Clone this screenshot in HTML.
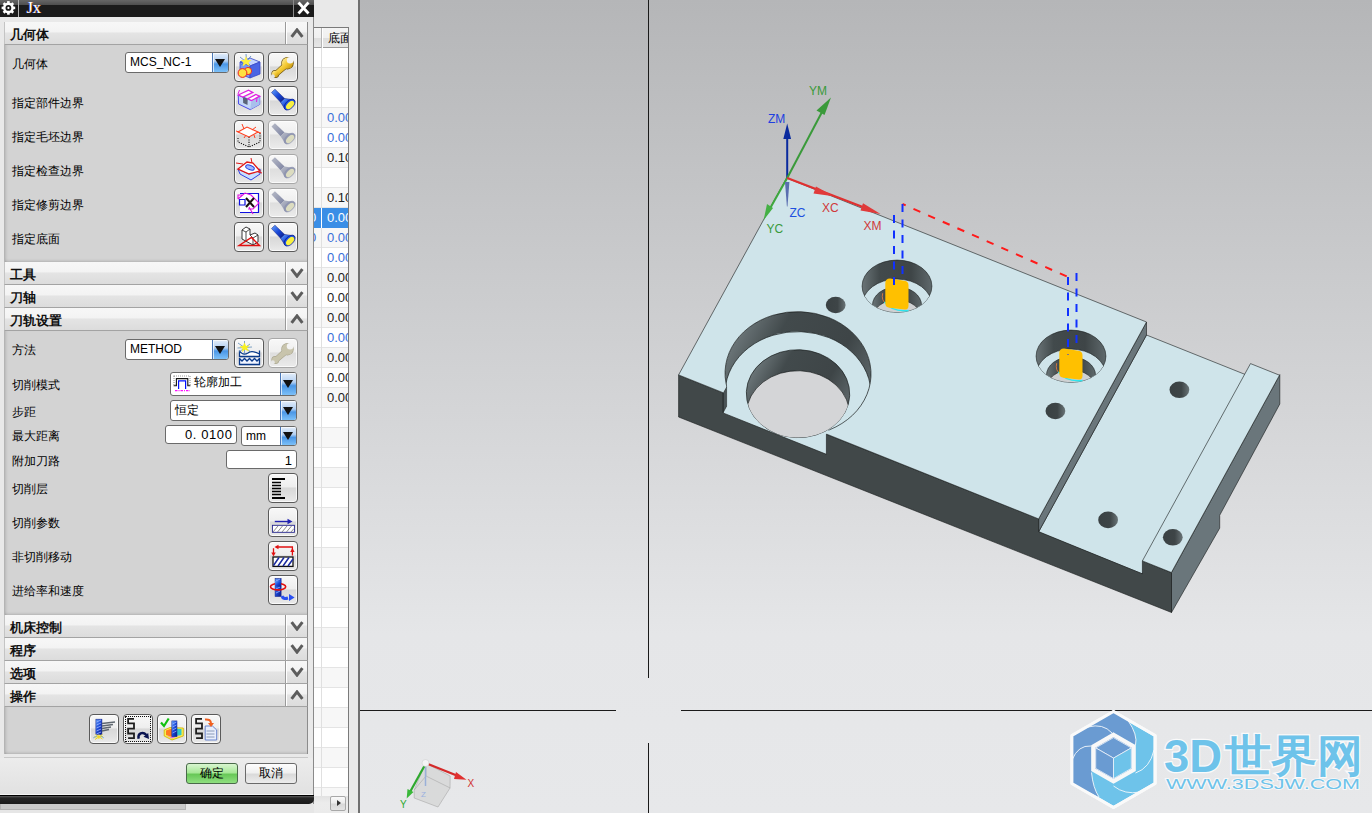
<!DOCTYPE html>
<html><head><meta charset="utf-8">
<style>
*{margin:0;padding:0;box-sizing:border-box}
html,body{width:1372px;height:813px;overflow:hidden;background:#e8e8e8;font-family:'Liberation Sans', sans-serif;font-size:12px;color:#000}
.a{position:absolute}
.hdr{position:absolute;left:4px;width:304px;height:23px;background:linear-gradient(#f7f7f7 0,#f3f3f3 45%,#e4e4e4 50%,#dcdcdc 100%);border-bottom:1px solid #a3a3a3;border-right:1px solid #8c8c8c;border-left:1px solid #c4c4c4}
.hdr .t{position:absolute;left:5px;top:4.6px;font-weight:bold;font-size:13px;line-height:15px;color:#111}
.hdr .sep{position:absolute;left:280px;top:0;width:1px;height:22px;background:#9a9a9a;box-shadow:1px 0 0 #fff}
.hdr svg{position:absolute;left:285px;top:6px}
.cnt{position:absolute;left:4px;width:304px;background:#d3d3d3;border-left:1px solid #b4b4b4;border-right:1px solid #8c8c8c;box-shadow:inset 3px 0 3px -2px rgba(0,0,0,0.13),inset 0 -3px 3px -2px rgba(0,0,0,0.16)}
.lbl{position:absolute;left:12px;font-size:12px;line-height:14px;color:#000}
.btn{position:absolute;width:30px;height:30px;border:1px solid #5a5a5a;border-radius:4px;background:linear-gradient(#f8f8f8 0,#eeeeee 46%,#d8d8d8 50%,#e0e0e0 75%,#eaeaea 100%);box-shadow:inset 0 0 0 1px rgba(255,255,255,0.75)}
.btn.dis{border-color:#a8a8a8;background:linear-gradient(#f8f8f8 0,#efefef 46%,#dedede 50%,#e4e4e4 75%,#ececec 100%)}
.btn svg{position:absolute;left:0;top:0}
.dd{position:absolute;height:21px;border:1px solid #6a6a6a;border-radius:3px;background:#fff;overflow:hidden}
.dd .v{position:absolute;left:4px;top:3px;font-size:12px;line-height:14px}
.dd .b{position:absolute;right:0;top:0;width:16px;height:100%;background:linear-gradient(#e4eefa 0,#b4d0f2 42%,#4a96e6 58%,#7cc0f8 100%);border-left:1px solid #4a78b8;box-shadow:inset 1px 1px 0 rgba(255,255,255,0.7)}
.dd .b:after{content:'';position:absolute;left:2px;top:50%;margin-top:-4px;border-left:5.5px solid transparent;border-right:5.5px solid transparent;border-top:8px solid #111}
.inp{position:absolute;height:19px;border:1px solid #6a6a6a;border-radius:3px;background:#fff}
.row{position:absolute;left:0;width:34px;height:20px;border-bottom:1px solid #e2e2e2}
</style></head><body>

<div class="a" style="left:313px;top:0;width:47px;height:813px;background:#e9e9e9"></div>
<div class="a" style="left:313px;top:27px;width:36px;height:786px;background:#fff;border:1px solid #7a7a7a;border-bottom:none;border-left:none;overflow:hidden">
<div class="a" style="left:0;top:0;width:35px;height:20px;background:linear-gradient(#f4f4f4 0,#f0f0f0 50%,#dedede 55%,#e6e6e6 100%);border-bottom:1px solid #9a9a9a"></div>
<div class="a" style="left:8px;top:0;width:1px;height:20px;background:#b5b5b5;box-shadow:1px 0 0 #fff"></div>
<div class="a" style="left:15px;top:3px;font-size:12px;line-height:14px;white-space:nowrap">底面</div>
<div class="a" style="left:0;top:20px;width:35px;height:20px;background:#fff;border-bottom:1px solid #e4e4e4"></div>
<div class="a" style="left:0;top:40px;width:35px;height:20px;background:#f7f7f7;border-bottom:1px solid #e4e4e4"></div>
<div class="a" style="left:0;top:60px;width:35px;height:20px;background:#fff;border-bottom:1px solid #e4e4e4"></div>
<div class="a" style="left:0;top:80px;width:35px;height:20px;background:#f7f7f7;border-bottom:1px solid #e4e4e4"></div>
<div class="a" style="left:0;top:100px;width:35px;height:20px;background:#fff;border-bottom:1px solid #e4e4e4"></div>
<div class="a" style="left:0;top:120px;width:35px;height:20px;background:#f7f7f7;border-bottom:1px solid #e4e4e4"></div>
<div class="a" style="left:0;top:140px;width:35px;height:20px;background:#fff;border-bottom:1px solid #e4e4e4"></div>
<div class="a" style="left:0;top:160px;width:35px;height:20px;background:#f7f7f7;border-bottom:1px solid #e4e4e4"></div>
<div class="a" style="left:0;top:180px;width:35px;height:20px;background:#fff;border-bottom:1px solid #e4e4e4"></div>
<div class="a" style="left:0;top:200px;width:35px;height:20px;background:#f7f7f7;border-bottom:1px solid #e4e4e4"></div>
<div class="a" style="left:0;top:220px;width:35px;height:20px;background:#fff;border-bottom:1px solid #e4e4e4"></div>
<div class="a" style="left:0;top:240px;width:35px;height:20px;background:#f7f7f7;border-bottom:1px solid #e4e4e4"></div>
<div class="a" style="left:0;top:260px;width:35px;height:20px;background:#fff;border-bottom:1px solid #e4e4e4"></div>
<div class="a" style="left:0;top:280px;width:35px;height:20px;background:#f7f7f7;border-bottom:1px solid #e4e4e4"></div>
<div class="a" style="left:0;top:300px;width:35px;height:20px;background:#fff;border-bottom:1px solid #e4e4e4"></div>
<div class="a" style="left:0;top:320px;width:35px;height:20px;background:#f7f7f7;border-bottom:1px solid #e4e4e4"></div>
<div class="a" style="left:0;top:340px;width:35px;height:20px;background:#fff;border-bottom:1px solid #e4e4e4"></div>
<div class="a" style="left:0;top:360px;width:35px;height:20px;background:#f7f7f7;border-bottom:1px solid #e4e4e4"></div>
<div class="a" style="left:0;top:380px;width:35px;height:20px;background:#fff;border-bottom:1px solid #e4e4e4"></div>
<div class="a" style="left:0;top:400px;width:35px;height:20px;background:#f7f7f7;border-bottom:1px solid #e4e4e4"></div>
<div class="a" style="left:0;top:420px;width:35px;height:20px;background:#fff;border-bottom:1px solid #e4e4e4"></div>
<div class="a" style="left:0;top:440px;width:35px;height:20px;background:#f7f7f7;border-bottom:1px solid #e4e4e4"></div>
<div class="a" style="left:0;top:460px;width:35px;height:20px;background:#fff;border-bottom:1px solid #e4e4e4"></div>
<div class="a" style="left:0;top:480px;width:35px;height:20px;background:#f7f7f7;border-bottom:1px solid #e4e4e4"></div>
<div class="a" style="left:0;top:500px;width:35px;height:20px;background:#fff;border-bottom:1px solid #e4e4e4"></div>
<div class="a" style="left:0;top:520px;width:35px;height:20px;background:#f7f7f7;border-bottom:1px solid #e4e4e4"></div>
<div class="a" style="left:0;top:540px;width:35px;height:20px;background:#fff;border-bottom:1px solid #e4e4e4"></div>
<div class="a" style="left:0;top:560px;width:35px;height:20px;background:#f7f7f7;border-bottom:1px solid #e4e4e4"></div>
<div class="a" style="left:0;top:580px;width:35px;height:20px;background:#fff;border-bottom:1px solid #e4e4e4"></div>
<div class="a" style="left:0;top:600px;width:35px;height:20px;background:#f7f7f7;border-bottom:1px solid #e4e4e4"></div>
<div class="a" style="left:0;top:620px;width:35px;height:20px;background:#fff;border-bottom:1px solid #e4e4e4"></div>
<div class="a" style="left:0;top:640px;width:35px;height:20px;background:#f7f7f7;border-bottom:1px solid #e4e4e4"></div>
<div class="a" style="left:0;top:660px;width:35px;height:20px;background:#fff;border-bottom:1px solid #e4e4e4"></div>
<div class="a" style="left:0;top:680px;width:35px;height:20px;background:#f7f7f7;border-bottom:1px solid #e4e4e4"></div>
<div class="a" style="left:0;top:700px;width:35px;height:20px;background:#fff;border-bottom:1px solid #e4e4e4"></div>
<div class="a" style="left:0;top:720px;width:35px;height:20px;background:#f7f7f7;border-bottom:1px solid #e4e4e4"></div>
<div class="a" style="left:0;top:740px;width:35px;height:20px;background:#fff;border-bottom:1px solid #e4e4e4"></div>
<div class="a" style="left:0;top:760px;width:35px;height:20px;background:#f7f7f7;border-bottom:1px solid #e4e4e4"></div>
<div class="a" style="left:0;top:780px;width:35px;height:20px;background:#fff;border-bottom:1px solid #e4e4e4"></div>
<div class="a" style="left:0;top:180px;width:35px;height:20px;background:#3a8ee6"></div>
<div class="a" style="left:8px;top:20px;width:1px;height:780px;background:#e0e0e0"></div>
<div class="a" style="left:8px;top:180px;width:1px;height:20px;background:#fff"></div>
<div class="a" style="left:14px;top:83px;font-size:13px;line-height:14px;color:#3a6fd8;white-space:nowrap">0.00</div>
<div class="a" style="left:14px;top:103px;font-size:13px;line-height:14px;color:#3a6fd8;white-space:nowrap">0.00</div>
<div class="a" style="left:14px;top:123px;font-size:13px;line-height:14px;color:#222;white-space:nowrap">0.10</div>
<div class="a" style="left:14px;top:163px;font-size:13px;line-height:14px;color:#222;white-space:nowrap">0.10</div>
<div class="a" style="left:14px;top:183px;font-size:13px;line-height:14px;color:#fff;white-space:nowrap">0.00</div>
<div class="a" style="left:14px;top:203px;font-size:13px;line-height:14px;color:#3a6fd8;white-space:nowrap">0.00</div>
<div class="a" style="left:14px;top:223px;font-size:13px;line-height:14px;color:#3a6fd8;white-space:nowrap">0.00</div>
<div class="a" style="left:14px;top:243px;font-size:13px;line-height:14px;color:#222;white-space:nowrap">0.00</div>
<div class="a" style="left:14px;top:263px;font-size:13px;line-height:14px;color:#222;white-space:nowrap">0.00</div>
<div class="a" style="left:14px;top:283px;font-size:13px;line-height:14px;color:#222;white-space:nowrap">0.00</div>
<div class="a" style="left:14px;top:303px;font-size:13px;line-height:14px;color:#3a6fd8;white-space:nowrap">0.00</div>
<div class="a" style="left:14px;top:323px;font-size:13px;line-height:14px;color:#222;white-space:nowrap">0.00</div>
<div class="a" style="left:14px;top:343px;font-size:13px;line-height:14px;color:#222;white-space:nowrap">0.00</div>
<div class="a" style="left:14px;top:363px;font-size:13px;line-height:14px;color:#222;white-space:nowrap">0.00</div>
<div class="a" style="left:-4px;top:183px;font-size:13px;line-height:14px;color:#fff">0</div>
<div class="a" style="left:-4px;top:203px;font-size:13px;line-height:14px;color:#3a6fd8">0</div>
</div>
<div class="a" style="left:358px;top:0;width:2px;height:813px;background:#707070"></div>
<div class="a" style="left:313px;top:796px;width:35px;height:17px;background:linear-gradient(#e2e2e2,#ececec 40%,#ebebeb)"></div>
<div class="a" style="left:330px;top:796px;width:16px;height:15px;border:1px solid #a8a8a8;border-radius:2px;background:linear-gradient(#fafafa 0,#ececec 45%,#d8d8d8 55%,#e4e4e4 100%)"></div>
<div class="a" style="left:337px;top:800px;border-top:3.5px solid transparent;border-bottom:3.5px solid transparent;border-left:4px solid #333"></div>
<svg class="a" style="left:360px;top:0" width="1012" height="813" viewBox="360 0 1012 813">
<defs>
<linearGradient id="vbg" x1="0" y1="0" x2="0" y2="813" gradientUnits="userSpaceOnUse">
<stop offset="0" stop-color="#b5b6b8"/><stop offset="0.78" stop-color="#e5e6e8"/><stop offset="1" stop-color="#e7e8ea"/></linearGradient>
<linearGradient id="wallg" x1="0" y1="0" x2="1" y2="0">
<stop offset="0" stop-color="#6a7477"/><stop offset="0.25" stop-color="#424a4c"/><stop offset="0.7" stop-color="#3e4547"/><stop offset="1" stop-color="#5f696c"/></linearGradient>
<linearGradient id="holeg" x1="0" y1="0" x2="1" y2="0">
<stop offset="0" stop-color="#3a4143"/><stop offset="0.6" stop-color="#3e4547"/><stop offset="1" stop-color="#6a7477"/></linearGradient>
</defs>
<rect x="360" y="0" width="1012" height="813" fill="url(#vbg)"/>
<clipPath id="cb1"><circle cx="0" cy="0" r="66.2" transform="matrix(1,0.4,-0.4644,0.8475,798.03,373.66)"/><polygon points="744.6,353.4 848.0,394.8 826.4,434.3 826.4,454.3 723.0,412.9 723.0,392.9"/></clipPath>
<clipPath id="cb2"><circle cx="0" cy="0" r="46.9" transform="matrix(1,0.4,-0.4644,0.8475,798.03,393.66)"/></clipPath>
<circle cx="0" cy="0" r="66.2" transform="matrix(1,0.4,-0.4644,0.8475,798.03,373.66)" fill="url(#wallg)"/>
<clipPath id="cb0"><circle cx="0" cy="0" r="66.2" transform="matrix(1,0.4,-0.4644,0.8475,798.03,373.66)"/></clipPath>
<g clip-path="url(#cb1)"><circle cx="0" cy="0" r="66.2" transform="matrix(1,0.4,-0.4644,0.8475,798.03,393.66)" fill="#cfe4ea"/></g>
<g clip-path="url(#cb0)"><circle cx="0" cy="0" r="66.2" transform="matrix(1,0.4,-0.4644,0.8475,798.03,393.66)" fill="none" stroke="#161a1a" stroke-width="0.6"/></g>
<polygon points="744.6,373.4 848.0,414.8 826.4,454.3 723.0,412.9" fill="#cfe4ea"/>
<polygon points="726.6,386.2 723.0,392.9 723.0,412.9 726.6,406.2" fill="#4a5356" stroke="#161a1a" stroke-width="0.5"/>
<circle cx="0" cy="0" r="46.9" transform="matrix(1,0.4,-0.4644,0.8475,798.03,393.66)" fill="url(#wallg)" stroke="#161a1a" stroke-width="0.6"/>
<g clip-path="url(#cb2)"><circle cx="0" cy="0" r="46.9" transform="matrix(1,0.4,-0.4644,0.8475,798.03,414.66)" fill="#d4d5d7" stroke="#161a1a" stroke-width="0.6"/></g>
<polygon points="1146.5,335.0 1250.5,376.6 1142.4,573.9 1038.4,532.3" fill="#cfe4ea" stroke="#161a1a" stroke-width="0.6"/>
<polygon points="1146.5,322.0 1146.5,335.0 1038.6,531.9 1038.6,518.9" fill="#6a767b" stroke="#161a1a" stroke-width="0.6"/>
<polygon points="1171.5,572.6 1279.8,374.6 1279.8,404.0 1219.7,515.3 1219.7,528.2 1171.5,612.5" fill="#6a767b" stroke="#161a1a" stroke-width="0.6"/>
<polygon points="678.6,375.0 678.6,417.0 1171.5,612.5 1171.5,572.6 1142.4,560.9 1142.4,573.9 1038.6,531.6 1038.6,518.7 826.4,434.3 826.4,454.3 723.0,412.9 723.0,392.9" fill="#414849" stroke="#161a1a" stroke-width="0.6"/>
<polygon points="1250.5,363.6 1279.5,375.2 1171.4,572.5 1142.4,560.9" fill="#cfe4ea" stroke="#161a1a" stroke-width="0.6"/>
<mask id="mtop" maskUnits="userSpaceOnUse" x="360" y="0" width="1012" height="813"><rect x="360" y="0" width="1012" height="813" fill="#fff"/>
<circle cx="0" cy="0" r="66.2" transform="matrix(1,0.4,-0.4644,0.8475,798.03,373.66)" fill="#000"/>
<polygon points="744.6,353.4 848.0,394.8 822.9,440.6 719.5,399.2" fill="#000"/>
</mask>
<polygon points="786.5,178.0 1146.5,322.0 1038.6,518.9 678.6,374.9" fill="#cfe4ea" mask="url(#mtop)"/>
<polygon points="786.5,178.0 1146.5,322.0 1038.6,518.9 678.6,374.9" fill="none" stroke="#161a1a" stroke-width="0.6" mask="url(#mtop)"/>
<mask id="mnotch" maskUnits="userSpaceOnUse" x="360" y="0" width="1012" height="813"><rect x="360" y="0" width="1012" height="813" fill="#fff"/>
<polygon points="738.1,365.3 841.5,406.7 826.4,434.3 826.4,464.3 710.3,446.1 723.0,392.9" fill="#000"/>
</mask>
<g mask="url(#mnotch)"><circle cx="0" cy="0" r="66.2" transform="matrix(1,0.4,-0.4644,0.8475,798.03,373.66)" fill="none" stroke="#161a1a" stroke-width="0.6"/></g>
<ellipse cx="835.7" cy="305" rx="9.9" ry="8.3" fill="url(#holeg)"/>
<ellipse cx="1055.4" cy="411" rx="9.9" ry="8.3" fill="url(#holeg)"/>
<ellipse cx="1179.4" cy="389.8" rx="9.9" ry="8.3" fill="url(#holeg)"/>
<ellipse cx="1108.1" cy="519.9" rx="9.9" ry="8.3" fill="url(#holeg)"/>
<ellipse cx="1172.8" cy="537.3" rx="9.9" ry="8.3" fill="url(#holeg)"/>
<clipPath id="ca1"><ellipse cx="897" cy="286.2" rx="34.9" ry="26.1"/></clipPath>
<clipPath id="cc1"><ellipse cx="897" cy="305.2" rx="24.5" ry="18.3"/></clipPath>
<ellipse cx="897" cy="286.2" rx="34.9" ry="26.1" fill="url(#wallg)" stroke="#161a1a" stroke-width="0.6"/>
<g clip-path="url(#ca1)"><ellipse cx="897" cy="305.2" rx="34.9" ry="26.1" fill="#cfe4ea" stroke="#161a1a" stroke-width="0.6"/>
<ellipse cx="897" cy="305.2" rx="24.5" ry="18.3" fill="url(#wallg)" stroke="#161a1a" stroke-width="0.6"/>
<g clip-path="url(#cc1)"><ellipse cx="897" cy="318.2" rx="24.5" ry="18.3" fill="#cfd1d3" stroke="#161a1a" stroke-width="0.5"/></g>
</g>
<path d="M882.7,293.2 Q881,300.2 886,303.7" fill="none" stroke="#f08040" stroke-width="0.8"/>
<path d="M884.4,301.9 Q892,312.2 908.5,310.5" fill="none" stroke="#2ee6f0" stroke-width="1.6"/>
<path d="M885.3,283.2 Q885.3,278.59999999999997 890,278.59999999999997 L904.5,280.7 Q908.5,281.2 908.5,285.2 L908.5,305.7 Q908.5,309.59999999999997 904.5,309.59999999999997 L889.5,307.7 Q885.3,307.2 885.3,303.2 Z" fill="#ffc000"/>
<clipPath id="ca2"><ellipse cx="1071" cy="356.2" rx="34.9" ry="26.1"/></clipPath>
<clipPath id="cc2"><ellipse cx="1071" cy="375.2" rx="24.5" ry="18.3"/></clipPath>
<ellipse cx="1071" cy="356.2" rx="34.9" ry="26.1" fill="url(#wallg)" stroke="#161a1a" stroke-width="0.6"/>
<g clip-path="url(#ca2)"><ellipse cx="1071" cy="375.2" rx="34.9" ry="26.1" fill="#cfe4ea" stroke="#161a1a" stroke-width="0.6"/>
<ellipse cx="1071" cy="375.2" rx="24.5" ry="18.3" fill="url(#wallg)" stroke="#161a1a" stroke-width="0.6"/>
<g clip-path="url(#cc2)"><ellipse cx="1071" cy="388.2" rx="24.5" ry="18.3" fill="#cfd1d3" stroke="#161a1a" stroke-width="0.5"/></g>
</g>
<path d="M1056.7,363.2 Q1055,370.2 1060,373.7" fill="none" stroke="#f08040" stroke-width="0.8"/>
<path d="M1058.4,371.9 Q1066,382.2 1082.5,380.5" fill="none" stroke="#2ee6f0" stroke-width="1.6"/>
<path d="M1059.3,353.2 Q1059.3,348.59999999999997 1064,348.59999999999997 L1078.5,350.7 Q1082.5,351.2 1082.5,355.2 L1082.5,375.7 Q1082.5,379.59999999999997 1078.5,379.59999999999997 L1063.5,377.7 Q1059.3,377.2 1059.3,373.2 Z" fill="#ffc000"/>
<g fill="none" stroke-width="2">
<line x1="902.5" y1="204" x2="1068" y2="277" stroke="#ff1a1a" stroke-dasharray="7.5,8.5" stroke-dashoffset="4"/>
<line x1="894" y1="215" x2="894" y2="286" stroke="#1030ff" stroke-dasharray="8,7.5"/>
<line x1="902.5" y1="204" x2="902.5" y2="275" stroke="#1030ff" stroke-dasharray="8,7.5"/>
<line x1="1068" y1="277" x2="1068" y2="355" stroke="#1030ff" stroke-dasharray="8,7.5"/>
<line x1="1076.5" y1="273" x2="1076.5" y2="345" stroke="#1030ff" stroke-dasharray="8,7.5"/>
</g>
<g font-family="&quot;Liberation Sans&quot;, sans-serif" font-size="12">
<line x1="787.2" y1="178" x2="787.2" y2="136" stroke="#0a2a9e" stroke-width="2"/>
<polygon points="787.2,123.5 783.3,139 791.1,139" fill="#0a2a9e"/>
<line x1="787.2" y1="178" x2="822" y2="112" stroke="#3a9a3a" stroke-width="2"/>
<polygon points="831,97.6 816.5,110.5 824.5,115" fill="#3a9a3a"/>
<line x1="787.2" y1="178" x2="768" y2="212" stroke="#3ea83e" stroke-width="2"/>
<polygon points="763.6,220.2 767,204 773,208" fill="#44b044"/>
<polygon points="785,182 789.4,182 787.5,206.6 786.9,206.6" fill="#5a6eb0"/>
<line x1="787.2" y1="178" x2="872" y2="210.5" stroke="#e03030" stroke-width="2"/>
<polygon points="833.6,196.2 816,186.5 813.5,193.5" fill="#e03a3a"/>
<polygon points="880.6,214 863,203.2 860.5,210.5" fill="#e03a3a"/>
<text x="768" y="122.5" fill="#2040e0">ZM</text>
<text x="809" y="94.8" fill="#3a9a3a">YM</text>
<text x="766.5" y="232.7" fill="#3a9a3a">YC</text>
<text x="789.5" y="217" fill="#2050e0">ZC</text>
<text x="822" y="211.9" fill="#d03a3a">XC</text>
<text x="863.5" y="229.6" fill="#d03a3a">XM</text>
</g>
<rect x="648" y="0" width="1" height="678" fill="#1a1a1a"/>
<rect x="648" y="743" width="1" height="70" fill="#1a1a1a"/>
<rect x="360" y="710" width="256" height="1" fill="#1a1a1a"/>
<rect x="681" y="710" width="691" height="1" fill="#1a1a1a"/>
<g>
<polygon points="425.5,763 450.2,776 450,788 438,807 414.2,798 414.2,790" fill="#d6d6d6" fill-opacity="0.8" stroke="#a8a8a8" stroke-width="0.6"/>
<polyline points="414.2,790 426,776 450.2,788" fill="none" stroke="#a8a8a8" stroke-width="0.6"/>
<line x1="426" y1="776" x2="426" y2="763" stroke="#a8a8a8" stroke-width="0.6"/>
<line x1="425.5" y1="764" x2="425.5" y2="786" stroke="#9ab0d8" stroke-width="1.5"/>
<text x="421" y="797" font-family="&quot;Liberation Sans&quot;, sans-serif" font-size="8" fill="#9ab0e0">Z</text>
<line x1="425.5" y1="763" x2="458" y2="776" stroke="#d42a2a" stroke-width="2.2"/>
<polygon points="466.5,779.7 456,772 454,779" fill="#e03030"/>
<line x1="425.5" y1="764" x2="410" y2="792" stroke="#2ea82e" stroke-width="2.2"/>
<polygon points="406.7,798.5 407.5,789 413.5,792" fill="#3ab83a"/>
<circle cx="425.5" cy="763" r="3.5" fill="#f4f4f4" stroke="#c8c8c8" stroke-width="0.5"/>
<text x="467.5" y="787" font-family="&quot;Liberation Sans&quot;, sans-serif" font-size="10" fill="#d03030">X</text>
<text x="400" y="807.5" font-family="&quot;Liberation Sans&quot;, sans-serif" font-size="10" fill="#2ea82e">Y</text>
</g>
<polygon points="1113.5,711.5 1155.1,735.5 1155.1,783.5 1113.5,807.5 1071.9,783.5 1071.9,735.5" fill="#6ec3ea" stroke="#fafafa" stroke-width="3" stroke-linejoin="round"/>
<path d="M1113.5,711.5 L1128,720.5 Q1138,735 1135.5,745 L1113.5,733 L1091.5,746 L1091.5,772.5 Q1093,788 1099,797 L1071.9,783.5 L1071.9,735.5 Z" fill="#6a9bd2"/>
<path d="M1088,727 Q1103,723 1112,733 M1072,760 Q1078,745 1091,746 M1128,720.5 Q1138,735 1135.5,745 M1091.5,772.5 Q1093,788 1099,797 M1154,750 Q1150,768 1135.5,773 M1113.5,786 Q1125,795 1140,792" fill="none" stroke="#f4f8fc" stroke-width="0.9"/>
<polygon points="1113.5,711.5 1155.1,735.5 1155.1,783.5 1113.5,807.5 1071.9,783.5 1071.9,735.5" fill="none" stroke="#fafafa" stroke-width="3" stroke-linejoin="round"/>
<polygon points="1113.5,734.8 1133.7,746.5 1133.7,769.8 1113.5,781.4 1093.3,769.8 1093.3,746.5" fill="#6a9bd2" stroke="#f8f8f8" stroke-width="4.2" stroke-linejoin="miter"/>
<polygon points="1113.5,737.6 1131.3,747.9 1113.5,758.1 1095.7,747.9" fill="#6a9bd2" stroke="#f0f4fa" stroke-width="0.8"/>
<polygon points="1095.7,747.9 1113.5,758.1 1113.5,778.6 1095.7,768.4" fill="#6a9bd2" stroke="#f0f4fa" stroke-width="0.8"/>
<polygon points="1131.3,747.9 1131.3,768.4 1113.5,778.6 1113.5,758.1" fill="#6ec3ea" stroke="#f0f4fa" stroke-width="0.8"/>
<g font-family="&quot;Liberation Sans&quot;, sans-serif" font-weight="bold" fill="#6ec3ea" stroke="#fafafa" paint-order="stroke">
<text x="1164" y="772" font-size="46" stroke-width="2.5" textLength="58" lengthAdjust="spacingAndGlyphs">3D</text>
<text x="1225" y="771" font-size="44" stroke-width="2.5" textLength="138" lengthAdjust="spacingAndGlyphs">世界网</text>
<text x="1166" y="788.5" font-size="14.5" font-weight="normal" stroke-width="1.6" textLength="194" lengthAdjust="spacingAndGlyphs">WWW.3DSJW.COM</text>
</g>
</svg>
<div class="a" style="left:0;top:0;width:314px;height:804px;background:#e9e9e9;border-right:1px solid #8a8a8a">
<div class="a" style="left:0;top:0;width:314px;height:17px;background:linear-gradient(#666 0,#505050 4.6px,#1b1b1b 5px,#1b1b1b 100%)"></div>
<svg class="a" style="left:0;top:0" width="17" height="17" viewBox="0 0 17 17"><g fill="#fff"><circle cx="8.4" cy="7.9" r="5.4"/><rect x="7.1" y="1.1" width="2.6" height="3" transform="rotate(0 8.4 7.9)"/><rect x="7.1" y="1.1" width="2.6" height="3" transform="rotate(45 8.4 7.9)"/><rect x="7.1" y="1.1" width="2.6" height="3" transform="rotate(90 8.4 7.9)"/><rect x="7.1" y="1.1" width="2.6" height="3" transform="rotate(135 8.4 7.9)"/><rect x="7.1" y="1.1" width="2.6" height="3" transform="rotate(180 8.4 7.9)"/><rect x="7.1" y="1.1" width="2.6" height="3" transform="rotate(225 8.4 7.9)"/><rect x="7.1" y="1.1" width="2.6" height="3" transform="rotate(270 8.4 7.9)"/><rect x="7.1" y="1.1" width="2.6" height="3" transform="rotate(315 8.4 7.9)"/></g><circle cx="8.4" cy="7.9" r="2.9" fill="#1b1b1b"/><circle cx="8.4" cy="7.9" r="1.1" fill="#fff"/></svg>
<div class="a" style="left:18px;top:0;width:1px;height:17px;background:#b4b4b4"></div>
<div class="a" style="left:26.5px;top:-1px;font-family:'Liberation Serif',serif;font-size:16px;line-height:17px;color:#fff;text-shadow:-0.6px 0 0 #2a3ad0,0.6px 0 0 #e08a20">Jx</div>
<div class="a" style="left:293px;top:0;width:1px;height:17px;background:#8a8a8a"></div>
<svg class="a" style="left:295px;top:0" width="17" height="17" viewBox="0 0 17 17"><path d="M3.5,2.5 L13.5,13.5 M13.5,2.5 L3.5,13.5" stroke="#fff" stroke-width="2.8"/></svg>
<div class="hdr" style="top:22px"><div class="t">几何体</div><div class="sep"></div><svg width="14" height="10" viewBox="0 0 14 10"><path d="M1.6,8.9 L7,1.9 L12.4,8.9" fill="none" stroke="#5c5c5c" stroke-width="3"/></svg></div>
<div class="cnt" style="top:45px;height:217px"></div>
<div class="hdr" style="top:262px"><div class="t">工具</div><div class="sep"></div><svg width="14" height="10" viewBox="0 0 14 10"><path d="M1.6,1.1 L7,8.1 L12.4,1.1" fill="none" stroke="#5c5c5c" stroke-width="3"/></svg></div>
<div class="hdr" style="top:285px"><div class="t">刀轴</div><div class="sep"></div><svg width="14" height="10" viewBox="0 0 14 10"><path d="M1.6,1.1 L7,8.1 L12.4,1.1" fill="none" stroke="#5c5c5c" stroke-width="3"/></svg></div>
<div class="hdr" style="top:308px"><div class="t">刀轨设置</div><div class="sep"></div><svg width="14" height="10" viewBox="0 0 14 10"><path d="M1.6,8.9 L7,1.9 L12.4,8.9" fill="none" stroke="#5c5c5c" stroke-width="3"/></svg></div>
<div class="cnt" style="top:331px;height:284px"></div>
<div class="hdr" style="top:615px"><div class="t">机床控制</div><div class="sep"></div><svg width="14" height="10" viewBox="0 0 14 10"><path d="M1.6,1.1 L7,8.1 L12.4,1.1" fill="none" stroke="#5c5c5c" stroke-width="3"/></svg></div>
<div class="hdr" style="top:638px"><div class="t">程序</div><div class="sep"></div><svg width="14" height="10" viewBox="0 0 14 10"><path d="M1.6,1.1 L7,8.1 L12.4,1.1" fill="none" stroke="#5c5c5c" stroke-width="3"/></svg></div>
<div class="hdr" style="top:661px"><div class="t">选项</div><div class="sep"></div><svg width="14" height="10" viewBox="0 0 14 10"><path d="M1.6,1.1 L7,8.1 L12.4,1.1" fill="none" stroke="#5c5c5c" stroke-width="3"/></svg></div>
<div class="hdr" style="top:684px"><div class="t">操作</div><div class="sep"></div><svg width="14" height="10" viewBox="0 0 14 10"><path d="M1.6,8.9 L7,1.9 L12.4,8.9" fill="none" stroke="#5c5c5c" stroke-width="3"/></svg></div>
<div class="cnt" style="top:707px;height:47px"></div>
<div class="a" style="left:4px;top:757px;width:304px;height:1px;background:#c8c8c8;box-shadow:0 1px 0 #fafafa"></div>
<div class="lbl" style="top:57px">几何体</div>
<div class="lbl" style="top:96px">指定部件边界</div>
<div class="lbl" style="top:130px">指定毛坯边界</div>
<div class="lbl" style="top:164px">指定检查边界</div>
<div class="lbl" style="top:198px">指定修剪边界</div>
<div class="lbl" style="top:232px">指定底面</div>
<div class="lbl" style="top:343px">方法</div>
<div class="lbl" style="top:378px">切削模式</div>
<div class="lbl" style="top:405px">步距</div>
<div class="lbl" style="top:429px">最大距离</div>
<div class="lbl" style="top:454px">附加刀路</div>
<div class="lbl" style="top:482px">切削层</div>
<div class="lbl" style="top:516px">切削参数</div>
<div class="lbl" style="top:550px">非切削移动</div>
<div class="lbl" style="top:584px">进给率和速度</div>
<div class="dd" style="left:125px;top:52px;width:104px;height:21px"><div class="v" style="top:2px">MCS_NC-1</div><div class="b"></div></div>
<div class="dd" style="left:125px;top:339px;width:104px;height:21px"><div class="v" style="top:2px">METHOD</div><div class="b"></div></div>
<div class="dd" style="left:170px;top:372px;width:127px;height:24px"><div class="b"></div></div>
<svg class="a" style="left:172px;top:374px" width="20" height="20" viewBox="172 374 20 20"><rect x="174" y="376" width="16" height="8.5" fill="none" stroke="#9a9a9a" stroke-width="1.2" stroke-dasharray="1,1"/><path d="M173.6,385.8 L176.4,385.8 L176.4,378.6 L187.8,378.6 L187.8,385.8 L190.4,385.8" fill="#fff" stroke="#111" stroke-width="1.1"/><path d="M178.6,388.9 L178.6,380.8 L185.6,380.8 L185.6,388.9" fill="none" stroke="#0010ff" stroke-width="1.2"/><path d="M175,390.6 L190,390.6" stroke="#ff10ff" stroke-width="1.2" stroke-dasharray="2.5,1,1,1"/></svg>
<div class="a" style="left:194px;top:375px;font-size:12px;line-height:15px">轮廓加工</div>
<div class="dd" style="left:170px;top:400px;width:127px;height:21px"><div class="v" style="top:2px">恒定</div><div class="b"></div></div>
<div class="inp" style="left:165px;top:425px;width:72px;height:19px"><div class="a" style="right:3.5px;top:1px;font-size:13px;line-height:16px;letter-spacing:0.6px">0.&nbsp;0100</div></div>
<div class="dd" style="left:241px;top:426px;width:56px;height:20px"><div class="v" style="top:2px">mm</div><div class="b"></div></div>
<div class="inp" style="left:226px;top:450px;width:71px;height:19px"><div class="a" style="right:4px;top:2px;font-size:13px;line-height:16px">1</div></div>
<svg width="0" height="0" style="position:absolute"><defs><linearGradient id="gblue" x1="0" y1="0" x2="1" y2="1"><stop offset="0" stop-color="#6aa8ff"/><stop offset="0.5" stop-color="#1a48d8"/><stop offset="1" stop-color="#0a1a80"/></linearGradient><linearGradient id="ggold" x1="0" y1="0" x2="1" y2="1"><stop offset="0" stop-color="#fff4b0"/><stop offset="0.5" stop-color="#f4c830"/><stop offset="1" stop-color="#b88a10"/></linearGradient><linearGradient id="ggrey" x1="0" y1="0" x2="1" y2="1"><stop offset="0" stop-color="#b8bcc8"/><stop offset="1" stop-color="#7a80a0"/></linearGradient></defs></svg>
<div class="btn" style="left:234px;top:52px"><svg width="28" height="28" viewBox="0 0 28 28"><polygon points="5,9 15,5 25,9 15,13" fill="#c4d4ff" stroke="#3848c8" stroke-width="0.8"/><polygon points="5,9 15,13 15,25 5,21" fill="#7a98f4" stroke="#3848c8" stroke-width="0.8"/><polygon points="15,13 25,9 25,21 15,25" fill="#4a64e4" stroke="#3848c8" stroke-width="0.8"/><path d="M11,1 L11.5,7 M5,4 L10,8 M16,3 L12,8 M6,12 L10,9 M15,12 L12,9" stroke="#4a80c0" stroke-width="0.8"/><polygon points="11,3 12.5,7 16.5,7 13.5,9.5 15,13.5 11,11 7.5,13.5 8.5,9.5 5.5,7 9.5,7" fill="#fff040"/><circle cx="13" cy="18" r="3.6" fill="#ffe040" stroke="#ee2020" stroke-width="0.9"/><circle cx="7.5" cy="20" r="4.4" fill="#ffe040" stroke="#ee2020" stroke-width="1"/></svg></div>
<div class="btn" style="left:268px;top:52px"><svg width="28" height="28" viewBox="0 0 28 28"><mask id="wm1" maskUnits="userSpaceOnUse" x="0" y="0" width="28" height="28"><rect width="28" height="28" fill="#fff"/><circle cx="20.6" cy="9.4" r="3.3" fill="#000"/><circle cx="3.4" cy="25.4" r="1.9" fill="#000"/></mask><g transform="translate(0.5,-2.2)"><g mask="url(#wm1)"><g fill="#6a5010" stroke="#6a5010" stroke-width="1.3"><circle cx="18" cy="12.4" r="5.6"/><polygon points="14.5,12.5 18.5,16 8.2,24.6 5.2,21.2"/><circle cx="5.8" cy="23.2" r="3.3"/></g><g fill="url(#ggold)"><circle cx="18" cy="12.4" r="5.6"/><polygon points="14.5,12.5 18.5,16 8.2,24.6 5.2,21.2"/><circle cx="5.8" cy="23.2" r="3.3"/></g></g></g></svg></div>
<div class="btn" style="left:234px;top:86px"><svg width="28" height="28" viewBox="0 0 28 28"><polygon points="3.2,8 3.6,17 15.2,22.6 24.7,17.4 24.7,9.2 16.5,13.5 12.7,11.8 7.9,10.1" fill="#c4d8f8" stroke="#3a3ae8" stroke-width="0.9"/><polygon points="15.2,22.6 24.7,17.4 24.7,9.2 16.5,13.5" fill="#a8c0ec"/><polygon points="7.9,10.1 12.7,11.8 12.5,18 8.2,16" fill="#5a6478"/><polygon points="3.2,8 13.5,3.2 17.8,5.4 7.9,10.1" fill="#fff" stroke="#e020e0" stroke-width="1.3"/><polygon points="12.7,11.8 20.8,7.5 24.7,9.2 16.5,13.5" fill="#fff" stroke="#e020e0" stroke-width="1.3"/><path d="M4.5,3 L3,7 M22,11 L21.5,15" stroke="#e020e0" stroke-width="1"/></svg></div>
<div class="btn" style="left:268px;top:86px"><svg width="28" height="28" viewBox="0 0 28 28"><path d="M2.5,5.6 L5.9,2.2 L15.6,11.4 L11.6,15.2 Z" fill="url(#gblue)" stroke="#0a1a80" stroke-width="0.5"/><path d="M15.6,11.4 L25,12.9 L15.9,22 L11.6,15.2 Z" fill="url(#gblue)" stroke="#0a1a80" stroke-width="0.5"/><ellipse cx="20.6" cy="17.6" rx="6.6" ry="3.9" transform="rotate(-45 20.6 17.6)" fill="#1a50e0" stroke="#0a1a90" stroke-width="0.7"/><ellipse cx="21.1" cy="18.1" rx="5" ry="2.8" transform="rotate(-45 21.1 18.1)" fill="#f8f040"/></svg></div>
<div class="btn" style="left:234px;top:120px"><svg width="28" height="28" viewBox="0 0 28 28"><path d="M3,17 L3,21 L14,26 L25,21 L25,12 M14,16 L14,26" fill="none" stroke="#111" stroke-width="1.1" stroke-dasharray="1.1,1.3"/><polygon points="3,11 12,6 23,11 14,16" fill="#fff" stroke="#ff4020" stroke-width="1.1"/><path d="M7,3 L9,8 M21,6 L17,9 M11,14 L9,17 M19,14 L20,17 M1,10 L4,11 M22,11 L26,12" stroke="#ff4020" stroke-width="1"/></svg></div>
<div class="btn dis" style="left:268px;top:120px"><svg width="28" height="28" viewBox="0 0 28 28"><path d="M2.5,5.6 L5.9,2.2 L15.6,11.4 L11.6,15.2 Z" fill="url(#ggrey)"/><path d="M15.6,11.4 L25,12.9 L15.9,22 L11.6,15.2 Z" fill="url(#ggrey)"/><ellipse cx="20.6" cy="17.6" rx="6.6" ry="3.9" transform="rotate(-45 20.6 17.6)" fill="#9096b0" stroke="#8a90b0" stroke-width="0.5"/><ellipse cx="21.1" cy="18.1" rx="5" ry="2.8" transform="rotate(-45 21.1 18.1)" fill="#dcdcc0"/></svg></div>
<div class="btn" style="left:234px;top:154px"><svg width="28" height="28" viewBox="0 0 28 28"><polygon points="3,14 5,19 16,25 25,19 25,14 14,19" fill="#c8e0ff" stroke="#2030e0" stroke-width="0.9"/><polygon points="3,14 12,7 18,8 25,16 14,19" fill="#fff" stroke="#e01818" stroke-width="1.3"/><ellipse cx="15" cy="12.5" rx="4.5" ry="2.2" transform="rotate(20 15 12.5)" fill="#a0b8ff" stroke="#2040e0" stroke-width="1"/><path d="M1,8 L8,9 M16,3 L17,8 M23,17 L27,18" stroke="#e01818" stroke-width="1"/></svg></div>
<div class="btn dis" style="left:268px;top:154px"><svg width="28" height="28" viewBox="0 0 28 28"><path d="M2.5,5.6 L5.9,2.2 L15.6,11.4 L11.6,15.2 Z" fill="url(#ggrey)"/><path d="M15.6,11.4 L25,12.9 L15.9,22 L11.6,15.2 Z" fill="url(#ggrey)"/><ellipse cx="20.6" cy="17.6" rx="6.6" ry="3.9" transform="rotate(-45 20.6 17.6)" fill="#9096b0" stroke="#8a90b0" stroke-width="0.5"/><ellipse cx="21.1" cy="18.1" rx="5" ry="2.8" transform="rotate(-45 21.1 18.1)" fill="#dcdcc0"/></svg></div>
<div class="btn" style="left:234px;top:188px"><svg width="28" height="28" viewBox="0 0 28 28"><path d="M5,4.5 L23.5,4.5 L23.5,23.5 L5,23.5 M4.5,10.5 L10,10.5 L10,16 L4.5,16 Z" fill="#fff" stroke="#1010e0" stroke-width="1.2"/><path d="M3,10 L10,4 L16,6 L24,14 L18,20 L13,20 M8,6 L3,6 L3,10 M14,18 L18,25" fill="none" stroke="#e010e0" stroke-width="1.1"/><path d="M11,9 L19,18 M19,9 L11,18" stroke="#1a1010" stroke-width="2"/></svg></div>
<div class="btn dis" style="left:268px;top:188px"><svg width="28" height="28" viewBox="0 0 28 28"><path d="M2.5,5.6 L5.9,2.2 L15.6,11.4 L11.6,15.2 Z" fill="url(#ggrey)"/><path d="M15.6,11.4 L25,12.9 L15.9,22 L11.6,15.2 Z" fill="url(#ggrey)"/><ellipse cx="20.6" cy="17.6" rx="6.6" ry="3.9" transform="rotate(-45 20.6 17.6)" fill="#9096b0" stroke="#8a90b0" stroke-width="0.5"/><ellipse cx="21.1" cy="18.1" rx="5" ry="2.8" transform="rotate(-45 21.1 18.1)" fill="#dcdcc0"/></svg></div>
<div class="btn" style="left:234px;top:222px"><svg width="28" height="28" viewBox="0 0 28 28"><polygon points="7,7 11,4 15,6 15,12 20,10 23,12 23,19 18,22 7,16" fill="#fff" stroke="#222" stroke-width="0.9"/><path d="M7,7 L11,9 L15,6 M11,9 L11,19 M15,12 L18,15 L23,12 M18,15 L18,22" fill="none" stroke="#222" stroke-width="0.8"/><polygon points="4,22.5 16.5,14.5 24.5,22.5" fill="none" stroke="#e01010" stroke-width="1.4"/></svg></div>
<div class="btn" style="left:268px;top:222px"><svg width="28" height="28" viewBox="0 0 28 28"><path d="M2.5,5.6 L5.9,2.2 L15.6,11.4 L11.6,15.2 Z" fill="url(#gblue)" stroke="#0a1a80" stroke-width="0.5"/><path d="M15.6,11.4 L25,12.9 L15.9,22 L11.6,15.2 Z" fill="url(#gblue)" stroke="#0a1a80" stroke-width="0.5"/><ellipse cx="20.6" cy="17.6" rx="6.6" ry="3.9" transform="rotate(-45 20.6 17.6)" fill="#1a50e0" stroke="#0a1a90" stroke-width="0.7"/><ellipse cx="21.1" cy="18.1" rx="5" ry="2.8" transform="rotate(-45 21.1 18.1)" fill="#f8f040"/></svg></div>
<div class="btn" style="left:234px;top:338px"><svg width="28" height="28" viewBox="0 0 28 28"><path d="M4.5,11.5 Q9,16 14,13.5 Q19,11 24.5,14 L24.5,17.5 L4.5,17.5 Z" fill="#fff"/><path d="M4.5,11.5 L4.5,17.5 L24.5,17.5 L24.5,11.5 M4.5,12 Q8,17 13,14 Q17,11 24.5,15" fill="none" stroke="#0a3a8a" stroke-width="1.3"/><path d="M4.5,19 L4.5,25.5 L24.5,25.5 L24.5,19 M4.5,19.5 L7,22 L9.5,19.5 L12,22 L14.5,19.5 L17,22 L19.5,19.5 L22,22 L24.5,19.5" fill="#f0f4ff" stroke="#0a3a8a" stroke-width="1.3"/><path d="M9.5,2 L9.5,15 M3,4 L16,13 M15,5 L4,13 M2.5,9 L17,8" stroke="#4a80b0" stroke-width="0.7"/><polygon points="9.5,3.5 11,7 14.5,6.5 12,9 14,12.5 10,10.5 7,13 7.5,9.5 4.5,7.5 8,7" fill="#f8f020"/></svg></div>
<div class="btn dis" style="left:268px;top:338px"><svg width="28" height="28" viewBox="0 0 28 28"><mask id="wm2" maskUnits="userSpaceOnUse" x="0" y="0" width="28" height="28"><rect width="28" height="28" fill="#fff"/><circle cx="20.6" cy="9.4" r="3.3" fill="#000"/><circle cx="3.4" cy="25.4" r="1.9" fill="#000"/></mask><g transform="translate(0.5,-2.2)"><g mask="url(#wm2)"><g fill="#aaa690" stroke="#aaa690" stroke-width="1.3"><circle cx="18" cy="12.4" r="5.6"/><polygon points="14.5,12.5 18.5,16 8.2,24.6 5.2,21.2"/><circle cx="5.8" cy="23.2" r="3.3"/></g><g fill="#c8c4ac"><circle cx="18" cy="12.4" r="5.6"/><polygon points="14.5,12.5 18.5,16 8.2,24.6 5.2,21.2"/><circle cx="5.8" cy="23.2" r="3.3"/></g></g></g></svg></div>
<div class="btn" style="left:268px;top:473px"><svg width="28" height="28" viewBox="0 0 28 28"><path d="M3,5 L16,5 M3,24 L16,24" stroke="#000" stroke-width="2"/><path d="M3,8.5 L12,8.5 M3,11.5 L12,11.5 M3,14.5 L12,14.5 M3,17.5 L12,17.5 M3,20.5 L12,20.5" stroke="#000" stroke-width="1.3"/></svg></div>
<div class="btn" style="left:268px;top:507px"><svg width="28" height="28" viewBox="0 0 28 28"><rect x="3.4" y="17.3" width="22" height="7" fill="#fff" stroke="#20208a" stroke-width="0.9"/><path d="M4,24 L9,18 M8.5,24 L13.5,18 M13,24 L18,18 M17.5,24 L22.5,18 M22,24 L25,20.5" stroke="#8a8a8a" stroke-width="1"/><path d="M5.8,13.5 L19.5,13.5" stroke="#2020b0" stroke-width="1.4"/><polygon points="23.5,13.5 18.5,10.8 18.5,16.2" fill="#2020b0"/></svg></div>
<div class="btn" style="left:268px;top:541px"><svg width="28" height="28" viewBox="0 0 28 28"><rect x="4" y="15" width="20" height="9.4" fill="#fff" stroke="#111" stroke-width="1.3"/><path d="M4.5,23.5 L10,15.5 M9,24 L15,15.5 M14,24 L20,15.5 M19,24 L24,17" stroke="#1a2aa0" stroke-width="1.5"/><path d="M4.5,6.3 L4.5,11.5 M8,5 L23.4,5 L23.4,13.5" fill="none" stroke="#e01010" stroke-width="1.3"/><polygon points="4.5,14.5 2.3,10.5 6.7,10.5" fill="#e01010"/><polygon points="23.4,6 21.2,10 25.6,10" fill="#e01010"/><polygon points="5.5,5 9.5,2.8 9.5,7.2" fill="#e01010"/></svg></div>
<div class="btn" style="left:268px;top:575px"><svg width="28" height="28" viewBox="0 0 28 28"><rect x="6.1" y="2.5" width="6" height="18" fill="url(#gblue)" stroke="#1a2a90" stroke-width="0.6"/><path d="M7,5 L11,3 M7,9 L11,7 M7,13 L11,11 M7,17 L11,15" stroke="#a0b8ff" stroke-width="0.8"/><ellipse cx="9.1" cy="10.7" rx="7.6" ry="3.2" fill="none" stroke="#e01010" stroke-width="1.6"/><rect x="6.1" y="5" width="6" height="5.5" fill="url(#gblue)"/><path d="M13,20 Q14,23.5 19,22" fill="none" stroke="#2a50f0" stroke-width="3"/><polygon points="25.6,21.5 20,18 20,25" fill="#2a50f0"/></svg></div>
<div class="btn" style="left:89px;top:714px"><svg width="28" height="28" viewBox="0 0 28 28"><rect x="5.9" y="4.2" width="6" height="15.3" fill="url(#gblue)" stroke="#1a2a90" stroke-width="0.6"/><path d="M6.5,7 L11,5 M6.5,10 L11,8 M6.5,13 L11,11 M6.5,16 L11,14 M6.5,19 L11,17" stroke="#a0b8ff" stroke-width="0.8"/><path d="M12,8.5 L25,7 M12,11 L23,9.5 M12,13.5 L21,12 M12,16 L19,14.5" stroke="#606870" stroke-width="1.3"/><path d="M8.9,19.5 L8.9,24 M4,22 L13,21.5 M5,24.5 L12.5,19.5 M12.5,24 L5.5,19.5" stroke="#f0d820" stroke-width="1"/><path d="M3,23 L7,21 M14,23 L10.5,21" stroke="#60a0e0" stroke-width="0.7"/></svg></div>
<div class="btn" style="left:123px;top:714px"><svg width="28" height="28" viewBox="0 0 28 28"><path d="M10,3.9 L4.1,3.9 L4.1,8.4 L10,8.4 L10,13.6 L4.1,13.6 L4.1,18.5 L10,18.5 L10,23.2 L4.1,23.2" fill="none" stroke="#1e1e1e" stroke-width="1.8"/><path d="M14.6,23.8 C13.5,18.5 18.5,16 22.5,20" fill="none" stroke="#0a1450" stroke-width="2.4"/><polygon points="25,24 19.5,21.8 24.2,18" fill="#0a1450"/></svg></div>
<div class="btn" style="left:157px;top:714px"><svg width="28" height="28" viewBox="0 0 28 28"><polygon points="6.2,15 12,12.5 25.3,13 25.3,21 14,25 6.2,21" fill="#f8f050" stroke="#d0b000" stroke-width="0.8"/><polygon points="8,15.5 14,13.5 14,22 8,20" fill="#ff7a20"/><polygon points="14,13.5 23.5,14 23.5,20 14,22" fill="#30c8c8"/><polygon points="9,21 14,22 23,20 14,23.5" fill="#e070e0"/><rect x="13.8" y="5.9" width="5.2" height="15.8" fill="url(#gblue)" stroke="#1a2a90" stroke-width="0.5"/><path d="M14.5,9 L18.5,7 M14.5,12 L18.5,10 M14.5,15 L18.5,13 M14.5,18 L18.5,16" stroke="#a0b8ff" stroke-width="0.7"/><path d="M3,7.5 L6,11 L10.7,3.5" fill="none" stroke="#10c010" stroke-width="2.2"/></svg></div>
<div class="btn" style="left:191px;top:714px"><svg width="28" height="28" viewBox="0 0 28 28"><path d="M10,3.9 L4.1,3.9 L4.1,8.4 L10,8.4 L10,13.6 L4.1,13.6 L4.1,18.5 L10,18.5 L10,23.2 L4.1,23.2" fill="none" stroke="#1e1e1e" stroke-width="1.8"/><path d="M13.2,11 L20.5,11 L24.7,15 L24.7,25 L13.2,25 Z" fill="#e8eefc" stroke="#5a78c8" stroke-width="0.9"/><path d="M14.5,16 L22.5,16 M14.5,19 L22.5,19 M14.5,22 L22.5,22" stroke="#8090b0" stroke-width="0.9"/><path d="M13,4.5 C17,4 19,5.5 19,8.5" fill="none" stroke="#f06020" stroke-width="2"/><polygon points="19,12 16,8 22,8" fill="#f06020"/></svg></div>
<div class="a" style="left:125px;top:716px;width:26px;height:26px;border:1.5px dotted #111"></div>
<div class="a" style="left:0;top:758px;width:313px;height:37px;background:linear-gradient(#ececec,#e1e1e1)"></div>
<div class="a" style="left:0;top:794px;width:313px;height:1px;background:#f4f4f4"></div>
<div class="a" style="left:186px;top:763px;width:52px;height:21px;border:1px solid #4a6a4a;border-radius:3px;background:linear-gradient(#d8f5d0 0,#a8e898 45%,#68c858 55%,#90e080 100%);text-align:center;font-size:12px;line-height:19px">确定</div>
<div class="a" style="left:245px;top:763px;width:52px;height:21px;border:1px solid #6a6a6a;border-radius:3px;background:linear-gradient(#fdfdfd 0,#f0f0f0 45%,#dadada 55%,#ececec 100%);text-align:center;font-size:12px;line-height:19px">取消</div>
<div class="a" style="left:0;top:795px;width:314px;height:9px;background:linear-gradient(#000 0,#000 1px,#505050 1.5px,#262626 3px,#1b1b1b 100%);border-bottom-right-radius:5px"></div>
</div>
<div class="a" style="left:0;top:804px;width:314px;height:9px;background:#e6e6e6"></div>
<div class="a" style="left:0;top:804px;width:186px;height:6px;background:#c9c9c9;border:1px solid #b4b4b4;border-top:none"></div>
</body></html>
